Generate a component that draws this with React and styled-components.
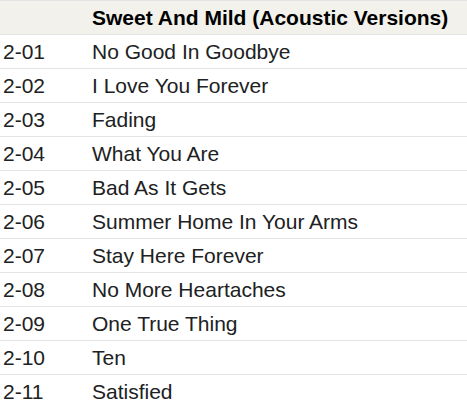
import React from 'react';
import styled, { createGlobalStyle } from 'styled-components';

const Global = createGlobalStyle`
    body {
        margin: 0;
        background: #fff;
        font-family: "Liberation Sans", Arial, sans-serif;
        color: #202122;
    }
`;

const Table = styled.table`
    width: 100%;
    border-collapse: collapse;
    font-size: 21px;
`;

const HeadRow = styled.tr`
    background: #f2f1eb;
    border-top: 1px solid #e4e4e4;
    border-bottom: 1px solid #e4e4e4;
`;

const Th = styled.th`
    height: 33px;
    padding: 0 3px;
    text-align: left;
    font-weight: bold;
    color: #000;
    white-space: nowrap;
`;

const Row = styled.tr`
    border-bottom: 1px solid #e4e4e4;
    &:last-child {
        border-bottom: none;
    }
`;

const Td = styled.td`
    height: 33px;
    padding: 0 3px;
    width: ${p => p.$w || 'auto'};
    white-space: nowrap;
`;

const tracks = [
    ['2-01', 'No Good In Goodbye'],
    ['2-02', 'I Love You Forever'],
    ['2-03', 'Fading'],
    ['2-04', 'What You Are'],
    ['2-05', 'Bad As It Gets'],
    ['2-06', 'Summer Home In Your Arms'],
    ['2-07', 'Stay Here Forever'],
    ['2-08', 'No More Heartaches'],
    ['2-09', 'One True Thing'],
    ['2-10', 'Ten'],
    ['2-11', 'Satisfied'],
];

export default function App() {
    return (
        <>
            <Global />
            <Table>
                <thead>
                    <HeadRow>
                        <Th style={{ width: 83 }}></Th>
                        <Th>Sweet And Mild (Acoustic Versions)</Th>
                    </HeadRow>
                </thead>
                <tbody>
                    {tracks.map(([no, title]) => (
                        <Row key={no}>
                            <Td>{no}</Td>
                            <Td>{title}</Td>
                        </Row>
                    ))}
                </tbody>
            </Table>
        </>
    );
}
